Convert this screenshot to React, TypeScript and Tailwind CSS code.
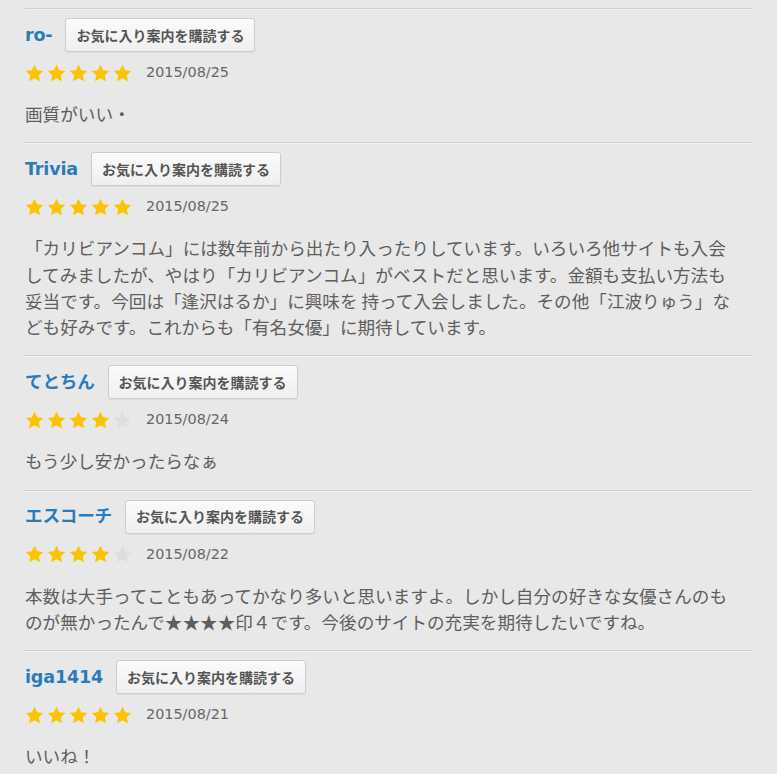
import React from "react";

type Review = {
  name: string;
  rating: number;
  date: string;
  body: string;
};

const reviews: Review[] = [
  { name: "ro-", rating: 5, date: "2015/08/25", body: "画質がいい・" },
  {
    name: "Trivia",
    rating: 5,
    date: "2015/08/25",
    body:
      "「カリビアンコム」には数年前から出たり入ったりしています。いろいろ他サイトも入会してみましたが、やはり「カリビアンコム」がベストだと思います。金額も支払い方法も妥当です。今回は「逢沢はるか」に興味を 持って入会しました。その他「江波りゅう」なども好みです。これからも「有名女優」に期待しています。",
  },
  { name: "てとちん", rating: 4, date: "2015/08/24", body: "もう少し安かったらなぁ" },
  {
    name: "エスコーチ",
    rating: 4,
    date: "2015/08/22",
    body:
      "本数は大手ってこともあってかなり多いと思いますよ。しかし自分の好きな女優さんのものが無かったんで★★★★印４です。今後のサイトの充実を期待したいですね。",
  },
  { name: "iga1414", rating: 5, date: "2015/08/21", body: "いいね！" },
];

function Star({ filled }: { filled: boolean }) {
  return (
    <svg viewBox="0 0 24 24" className="w-[19px] h-[19px]">
      <path
        d="M12 1l3.4 7 7.6.9-5.6 5.3 1.5 7.7L12 18.1l-6.9 3.8 1.5-7.7L1 8.9 8.6 8z"
        fill={filled ? "#fcc400" : "#dedede"}
      />
    </svg>
  );
}

function ReviewItem({ review }: { review: Review }) {
  return (
    <div>
      <div className="h-px bg-[#cfcfcf]" />
      <div className="h-px bg-[#f2f2f2]" />
      <div className="pt-2 pb-[15px]">
        <div className="flex items-center h-[34px]">
          <span className="font-['DejaVu_Sans','Noto_Sans_CJK_JP',sans-serif] font-bold text-[17.6px] tracking-[-0.2px] text-[#2a7bbb]">
            {review.name}
          </span>
          <button className="ml-[13px] h-[34px] px-[10px] rounded-[3px] border border-[#cdcdcd] bg-gradient-to-b from-[#fbfbfb] to-[#efefef] shadow-[0_1px_1px_rgba(0,0,0,0.06)] font-['Noto_Sans_CJK_JP',sans-serif] font-bold text-[14px] text-[#555]">
            お気に入り案内を購読する
          </button>
        </div>
        <div className="flex items-center h-[22px] mt-[10px]">
          <div className="flex gap-[3px]">
            {[0, 1, 2, 3, 4].map((i) => (
              <Star key={i} filled={i < review.rating} />
            ))}
          </div>
          <span className="ml-[14px] font-['DejaVu_Sans',sans-serif] text-[14.4px] text-[#666]">
            {review.date}
          </span>
        </div>
        <p className="mt-[17px] pr-[9px] font-['Noto_Sans_CJK_JP',sans-serif] text-[17.6px] leading-[26.25px] text-[#5e5e5e]">
          {review.body}
        </p>
      </div>
    </div>
  );
}

export default function App() {
  return (
    <div className="min-h-screen bg-[#e8e8e8] pt-2">
      <div className="ml-[25px] w-[727px]">
        {reviews.map((r, idx) => (
          <ReviewItem key={idx} review={r} />
        ))}
      </div>
    </div>
  );
}
